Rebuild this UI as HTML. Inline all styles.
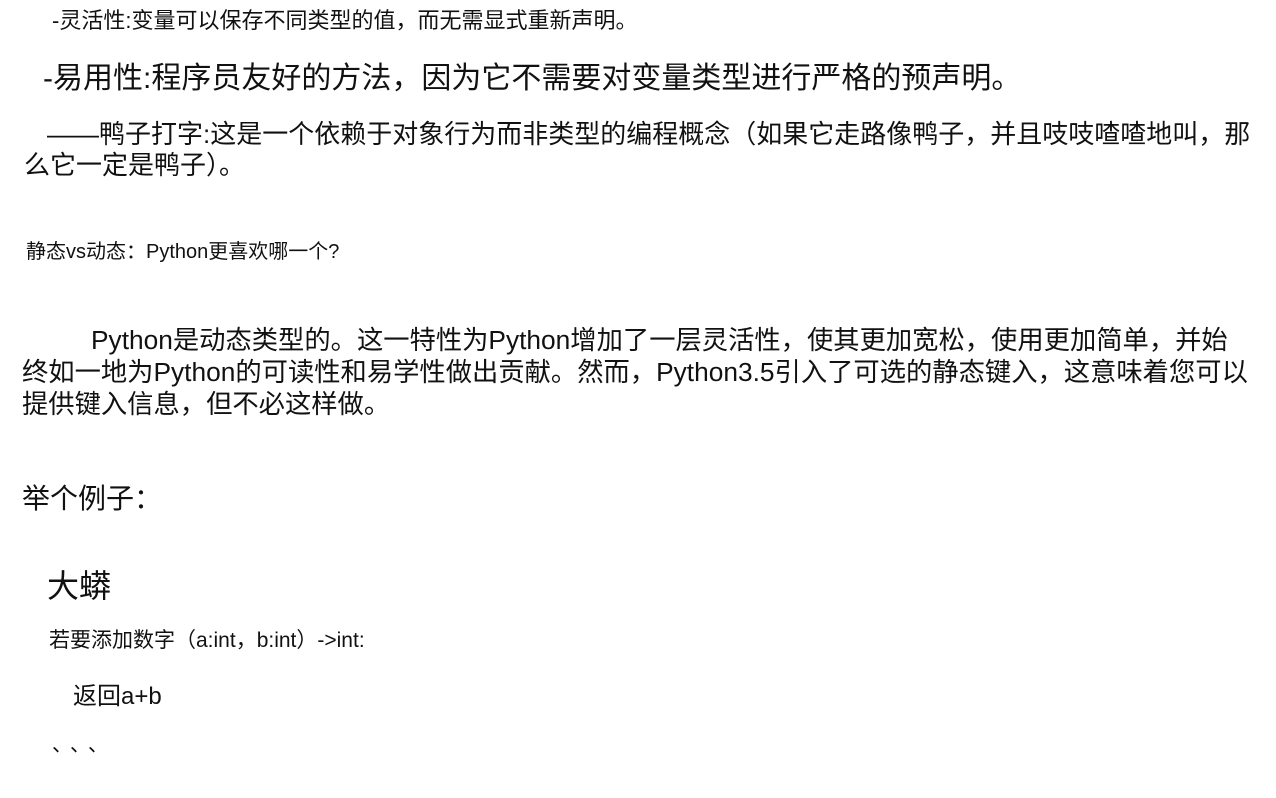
<!DOCTYPE html>
<html><head><meta charset="utf-8">
<style>
html,body{margin:0;padding:0;background:#fff;}
body{width:1276px;height:798px;position:relative;overflow:hidden;color:#111;
font-family:"Liberation Sans","Noto Sans CJK SC",sans-serif;}
.t{position:absolute;white-space:nowrap;}
</style></head><body>
<div class="t" style="left:52px;top:10px;font-size:22px;line-height:22px;">-灵活性:变量可以保存不同类型的值，而无需显式重新声明。</div>
<div class="t" style="left:43px;top:64px;font-size:30px;line-height:30px;">-易用性:程序员友好的方法，因为它不需要对变量类型进行严格的预声明。</div>
<div class="t" style="left:47px;top:121px;font-size:26px;line-height:26px;">——鸭子打字:这是一个依赖于对象行为而非类型的编程概念（如果它走路像鸭子，并且吱吱喳喳地叫，那</div>
<div class="t" style="left:24px;top:152px;font-size:26px;line-height:26px;">么它一定是鸭子）。</div>
<div class="t" style="left:26px;top:242px;font-size:20px;line-height:20px;">静态vs动态：Python更喜欢哪一个?</div>
<div class="t" style="left:91px;top:324px;font-size:26.3px;line-height:32px;">Python是动态类型的。这一特性为Python增加了一层灵活性，使其更加宽松，使用更加简单，并始</div>
<div class="t" style="left:22px;top:356px;font-size:26.3px;line-height:32px;">终如一地为Python的可读性和易学性做出贡献。然而，Python3.5引入了可选的静态键入，这意味着您可以</div>
<div class="t" style="left:22px;top:388px;font-size:26.3px;line-height:32px;">提供键入信息，但不必这样做。</div>
<div class="t" style="left:22px;top:485px;font-size:28px;line-height:28px;">举个例子：</div>
<div class="t" style="left:47px;top:570px;font-size:32px;line-height:32px;">大蟒</div>
<div class="t" style="left:49px;top:630px;font-size:21px;line-height:21px;">若要添加数字（a:int，b:int）->int:</div>
<div class="t" style="left:73px;top:685px;font-size:24px;line-height:24px;">返回a+b</div>
<div class="t" style="left:52px;top:735px;font-size:20px;line-height:20px;letter-spacing:8px;">、、、</div>
</body></html>
